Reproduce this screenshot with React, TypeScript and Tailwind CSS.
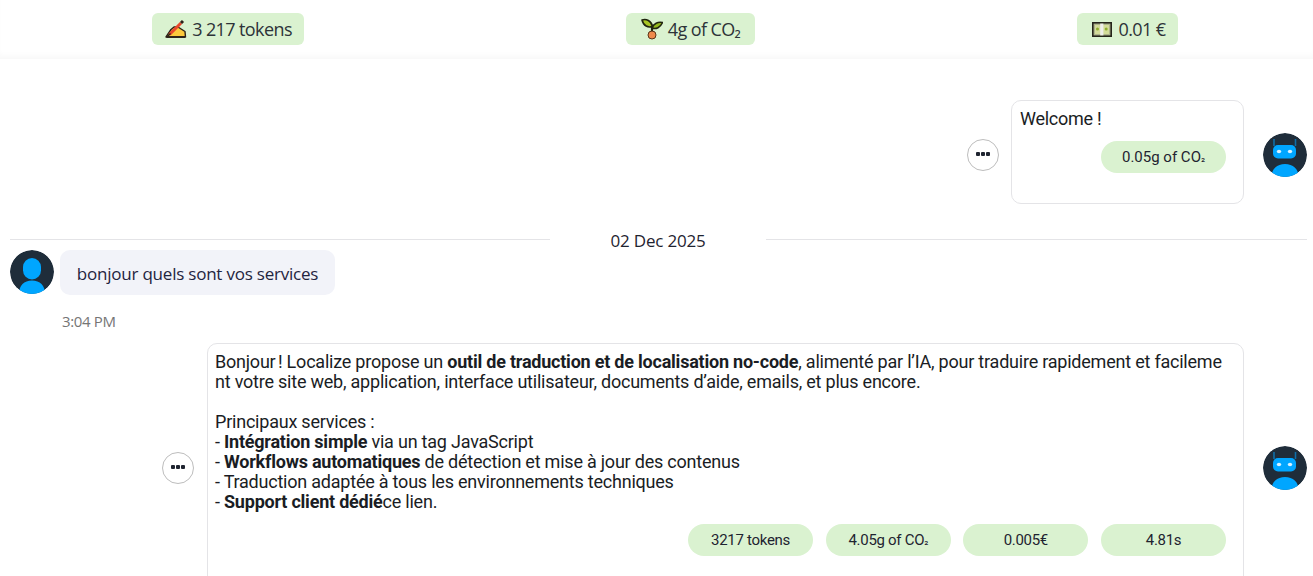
import React from "react";

const Pencil = () => (
  <svg width="22" height="20" viewBox="0 0 22 20" className="ml-[1px] shrink-0">
    <path d="M1 18 L6 10.5 L9 8 L13 8 L20 12.5 L20.5 18 Z" fill="#fcc93c" stroke="#2b2118" strokeWidth="1.4" strokeLinejoin="round" />
    <path d="M1.5 18 L20 18" stroke="#2b2118" strokeWidth="1.8" />
    <path d="M4.5 15.5 L16 4" stroke="#e8482c" strokeWidth="3" />
    <path d="M16 4 L18 2" stroke="#2b2118" strokeWidth="3" />
    <path d="M3 17 L5.5 14.5" stroke="#2b2118" strokeWidth="1.4" />
  </svg>
);

const Sprout = () => (
  <svg width="22" height="22" viewBox="0 0 22 22" className="shrink-0">
    <path d="M1 2 C5 0.5 10.5 2.5 11.5 8.5 C7 10 2.5 8 1 2 Z" fill="#a9c623" stroke="#20240f" strokeWidth="1.6" strokeLinejoin="round" />
    <path d="M21.5 4.5 C17 3.5 12.5 5.5 11 10 C15 11.5 19.5 9.5 21.5 4.5 Z" fill="#93b81e" stroke="#20240f" strokeWidth="1.6" strokeLinejoin="round" />
    <path d="M11 8 L11 15" stroke="#20240f" strokeWidth="2.2" />
    <circle cx="11" cy="17" r="4" fill="#ee8a4c" stroke="#5a3418" strokeWidth="1" />
  </svg>
);

const Bill = () => (
  <svg width="20" height="15" viewBox="0 0 20 15" className="ml-[2px] mr-[2px] shrink-0">
    <rect x="0.8" y="0.8" width="18.4" height="13.4" fill="#aeb48c" stroke="#25251b" strokeWidth="1.6" />
    <rect x="3" y="3" width="14" height="9" fill="#d3dc9a" />
    <rect x="8.2" y="1.6" width="3.2" height="11.8" fill="#eeeeea" />
    <circle cx="5.5" cy="7" r="1.5" fill="#8fae2c" />
    <circle cx="14.2" cy="7" r="1.5" fill="#8fae2c" />
  </svg>
);

const Robot = () => (
  <svg width="44" height="44" viewBox="0 0 44 44" className="shrink-0 rounded-full">
    <circle cx="22" cy="22" r="22" fill="#1f2d3a" />
    <path d="M8.5 44 C8.5 36 14 31 22 31 C30 31 35.5 36 35.5 44 Z" fill="#00a6ff" />
    <path d="M11 6 L11 13 M32.5 6 L32.5 13" stroke="#0f6ea8" strokeWidth="1.6" />
    <rect x="10" y="12" width="23" height="13.5" rx="5" fill="#00a6ff" />
    <ellipse cx="16" cy="18.5" rx="2.2" ry="1.7" fill="#d8f2ff" />
    <ellipse cx="27" cy="18.5" rx="2.2" ry="1.7" fill="#d8f2ff" />
  </svg>
);

const Person = () => (
  <svg width="44" height="44" viewBox="0 0 44 44" className="shrink-0 rounded-full">
    <circle cx="22" cy="22" r="22" fill="#1f2d3a" />
    <rect x="13" y="8" width="18" height="21.5" rx="9" fill="#00a6ff" />
    <path d="M9 44 C9 35.5 14 30.5 22 30.5 C30 30.5 35 35.5 35 44 Z" fill="#00a6ff" />
  </svg>
);

const Dots = () => (
  <button className="flex h-8 w-8 shrink-0 items-center justify-center rounded-full border border-[#bdbdbd] bg-white">
    <span className="mb-[3px] flex gap-[1px]">
      <span className="h-1 w-1 rounded-[1px] bg-[#1f2430]" />
      <span className="h-1 w-1 rounded-[1px] bg-[#1f2430]" />
      <span className="h-1 w-1 rounded-[1px] bg-[#1f2430]" />
    </span>
  </button>
);

const Stat = ({ w, children }: { w: string; children: React.ReactNode }) => (
  <div className={`flex h-8 items-center justify-center gap-[5px] rounded-md bg-[#daf2d0] text-[18px] tracking-[-0.6px] text-[#2d3338] ${w}`}>{children}</div>
);

const Chip = ({ children, cls }: { children: React.ReactNode; cls?: string }) => (
  <div className={`flex h-8 w-[125px] items-center justify-center rounded-full bg-[#daf2d0] text-[#1f2430] ${cls ?? "text-[15px] tracking-[-0.3px]"}`}>{children}</div>
);

const Sub = () => <span className="text-[11px]">₂</span>;

export default function App() {
  return (
    <div className="h-[576px] w-[1313px] overflow-hidden bg-white text-[#1a1d24] [font-family:Roboto,sans-serif]">
      <header className="flex h-[59px] items-start justify-between bg-white pl-[152px] pr-[135px] pt-[13px] [font-family:'Open_Sans',sans-serif] shadow-[inset_0_-6px_6px_-3px_#f8f8f8]">
        <Stat w="w-[152px]"><Pencil />3 217 tokens</Stat>
        <Stat w="w-[129px]"><Sprout />4g of CO₂</Stat>
        <Stat w="w-[101px]"><Bill />0.01 €</Stat>
      </header>

      <main className="pl-[10px] pr-[6px]">
        <section className="mt-[41px] flex items-start justify-end">
          <div className="mt-[39px]"><Dots /></div>
          <div className="ml-3 h-[104px] w-[233px] rounded-[10px] border border-[#e4e4e7] pl-2 pr-[17px] pt-2">
            <p className="text-[18px] leading-5 tracking-[-0.25px]">Welcome !</p>
            <div className="mt-3 flex justify-end"><Chip cls="text-[15px]">0.05g of CO<Sub /></Chip></div>
          </div>
          <div className="ml-[19px] mt-[33px]"><Robot /></div>
        </section>

        <div className="mt-[25px] flex h-5 items-center">
          <div className="h-px w-[540px] bg-[#e4e4e7]" />
          <div className="w-[216px] pt-1 text-center text-[17px] leading-5 tracking-[-0.2px] text-[#1f2430] [font-family:'Open_Sans',sans-serif]">02 Dec 2025</div>
          <div className="h-px flex-1 bg-[#e4e4e7]" />
        </div>

        <section className="mt-[1px] flex items-start gap-[6px]">
          <Person />
          <div className="flex h-[45px] w-[275px] items-center justify-center rounded-[10px] bg-[#f2f3f9] pt-[2px] text-[17px] tracking-[-0.22px] text-[#1f2440] [font-family:'Open_Sans',sans-serif]">bonjour quels sont vos services</div>
        </section>
        <p className="ml-[52px] mt-4 text-[15px] leading-5 tracking-[-0.35px] text-[#757575] [font-family:'Open_Sans',sans-serif]">3:04 PM</p>

        <section className="mt-3 flex items-center justify-end">
          <Dots />
          <div className="ml-[13px] h-[250px] w-[1037px] shrink-0 rounded-[10px] border border-[#e4e4e7] pl-[7px] pr-[17px] pt-2">
            <div className="break-all text-[18px] leading-5 tracking-[-0.22px]">
              <p>Bonjour<span className="tracking-[-2px]"> </span>! Localize propose un <b>outil de traduction et de localisation no-code</b>, alimenté par l’IA, pour traduire rapidement et facilement votre site web, application, interface utilisateur, documents d’aide, emails, et plus encore.</p>
              <p className="mt-5">Principaux services :</p>
              <p>- <b>Intégration simple</b> via un tag JavaScript</p>
              <p>- <b>Workflows automatiques</b> de détection et mise à jour des contenus</p>
              <p>- Traduction adaptée à tous les environnements techniques</p>
              <p>- <b>Support client dédié</b>ce lien.</p>
            </div>
            <div className="mt-3 flex justify-end gap-[12.67px]">
              <Chip>3217 tokens</Chip>
              <Chip>4.05g of CO<Sub /></Chip>
              <Chip>0.005€</Chip>
              <Chip>4.81s</Chip>
            </div>
          </div>
          <div className="ml-[19px]"><Robot /></div>
        </section>
      </main>
    </div>
  );
}
